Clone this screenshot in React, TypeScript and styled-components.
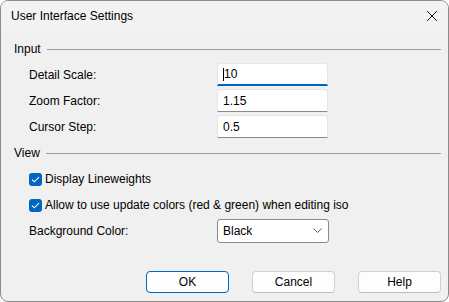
import React from "react";
import styled, { createGlobalStyle } from "styled-components";

const GlobalStyle = createGlobalStyle`
  html, body {
    margin: 0;
    padding: 0;
    background: #ffffff;
  }
  body {
    font-family: "Liberation Sans", Arial, sans-serif;
    font-size: 12px;
    color: #000;
  }
`;

const Window = styled.div`
  width: 449px;
  height: 302px;
  box-sizing: border-box;
  border: 1px solid #8c8c8c;
  border-radius: 8px;
  background: #f0f0f0;
  display: flex;
  flex-direction: column;
  overflow: hidden;
`;

const TitleBar = styled.div`
  height: 30px;
  background: #f3f3f3;
  display: flex;
  align-items: center;
  justify-content: space-between;
  padding: 0 10px 0 10px;
  flex-shrink: 0;
`;

const Title = styled.span`
  font-size: 12px;
  margin-top: -1px;
`;

const CloseBtn = styled.span`
  display: flex;
  width: 12px;
  height: 12px;
  margin-right: 0px;
  margin-top: -1px;
`;

const Body = styled.div`
  flex: 1;
  display: flex;
  flex-direction: column;
  padding: 10px 7px 0 13px;
`;

const SectionHeader = styled.div<{ $top?: number }>`
  display: flex;
  align-items: center;
  gap: 6px;
  height: 16px;
  margin-top: ${(p) => p.$top ?? 0}px;
`;

const Rule = styled.div`
  flex: 1;
  height: 1px;
  background: #a0a0a0;
`;

const Row = styled.div<{ $top?: number; $h?: number }>`
  display: flex;
  align-items: center;
  height: ${(p) => p.$h ?? 23}px;
  margin-top: ${(p) => p.$top ?? 0}px;
  padding-left: 15px;
`;

const Label = styled.span`
  width: 188px;
`;

const Field = styled.div<{ $focused?: boolean }>`
  position: relative;
  box-sizing: border-box;
  width: 111px;
  height: 23px;
  background: #fff;
  border: 1px solid #e6e6e6;
  border-bottom: ${(p) => (p.$focused ? "2px solid #0067c0" : "1px solid #8a8a8a")};
  border-radius: 3px 3px 0 0;
  display: flex;
  align-items: center;
  padding-left: 5px;
`;

const Caret = styled.span`
  display: inline-block;
  width: 1px;
  height: 13px;
  background: #000;
  margin-right: 0px;
`;

const Check = styled.span`
  width: 13px;
  height: 13px;
  border-radius: 3px;
  background: #0067c0;
  display: flex;
  align-items: center;
  justify-content: center;
  margin-right: 3px;
  flex-shrink: 0;
`;

const Select = styled.div`
  box-sizing: border-box;
  width: 112px;
  height: 24px;
  background: #fff;
  border: 1px solid #8a8a8a;
  border-radius: 3px;
  display: flex;
  align-items: center;
  justify-content: space-between;
  padding: 0 6px 0 5px;
`;

const Footer = styled.div`
  margin-top: auto;
  display: flex;
  justify-content: flex-end;
  gap: 23px;
  padding: 0 0 8px 0;
`;

const Button = styled.button<{ $primary?: boolean }>`
  box-sizing: border-box;
  width: 83px;
  height: 22px;
  font-family: inherit;
  font-size: 12px;
  color: #000;
  background: #fdfdfd;
  border: 1px solid ${(p) => (p.$primary ? "#0067c0" : "#d0d0d0")};
  border-bottom-color: ${(p) => (p.$primary ? "#0067c0" : "#bcbcbc")};
  border-radius: 4px;
  padding: 0;
`;

function CheckMark() {
  return (
    <svg width="9" height="7" viewBox="0 0 9 7">
      <path d="M1 3.6 L3.3 5.8 L8 1.2" fill="none" stroke="#fff" strokeWidth="1.1" />
    </svg>
  );
}

export default function App() {
  return (
    <>
      <GlobalStyle />
      <Window>
        <TitleBar>
          <Title>User Interface Settings</Title>
          <CloseBtn>
            <svg width="12" height="12" viewBox="0 0 12 12">
              <path d="M1 1 L11 11 M11 1 L1 11" stroke="#1a1a1a" strokeWidth="1" />
            </svg>
          </CloseBtn>
        </TitleBar>
        <Body>
          <SectionHeader>
            <span>Input</span>
            <Rule />
          </SectionHeader>
          <Row $top={6}>
            <Label>Detail Scale:</Label>
            <Field $focused>
              <Caret />
              10
            </Field>
          </Row>
          <Row $top={3}>
            <Label>Zoom Factor:</Label>
            <Field>1.15</Field>
          </Row>
          <Row $top={3}>
            <Label>Cursor Step:</Label>
            <Field>0.5</Field>
          </Row>
          <SectionHeader $top={7}>
            <span>View</span>
            <Rule />
          </SectionHeader>
          <Row $top={5} $h={26}>
            <Check>
              <CheckMark />
            </Check>
            Display Lineweights
          </Row>
          <Row $h={26}>
            <Check>
              <CheckMark />
            </Check>
            Allow to use update colors (red &amp; green) when editing iso
          </Row>
          <Row $top={1}>
            <Label>Background Color:</Label>
            <Select>
              <span>Black</span>
              <svg width="9" height="5" viewBox="0 0 9 5">
                <path d="M0.5 0.5 L4.5 4.5 L8.5 0.5" fill="none" stroke="#5f5f5f" strokeWidth="1" />
              </svg>
            </Select>
          </Row>
          <Footer>
            <Button $primary>OK</Button>
            <Button>Cancel</Button>
            <Button>Help</Button>
          </Footer>
        </Body>
      </Window>
    </>
  );
}
